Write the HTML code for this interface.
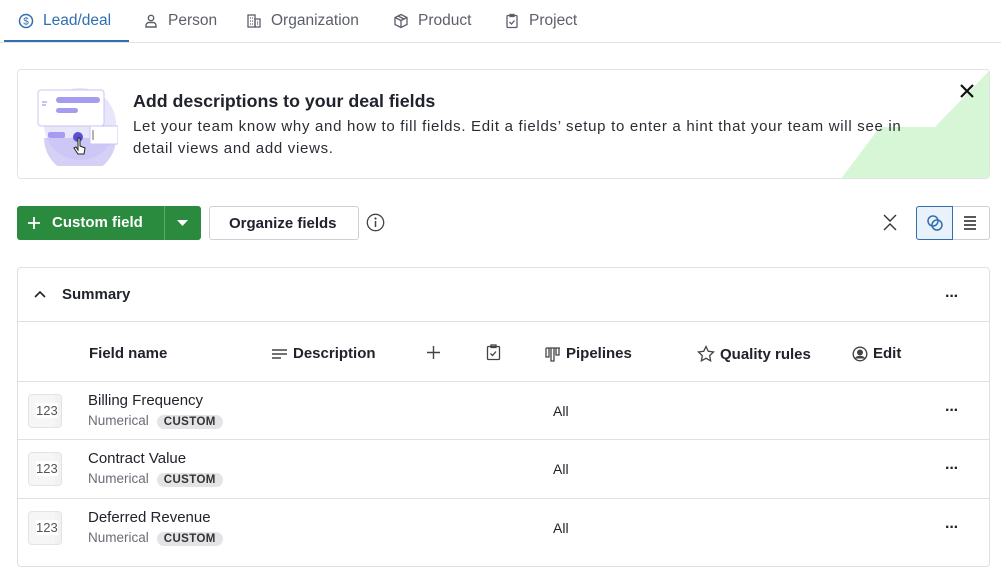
<!DOCTYPE html>
<html><head><meta charset="utf-8"><style>
*{box-sizing:border-box;margin:0;padding:0}
body{width:1001px;height:556px;overflow:hidden;background:#fff;font-family:"Liberation Sans",sans-serif;color:#21232c;position:relative}
.abs{position:absolute}
.tab{position:absolute;top:12px;font-size:15.5px;color:#5c5f6a;display:flex;align-items:center;gap:9px}
.tab svg{width:16px;height:16px}
.hdr{position:absolute;top:345px;font-size:15px;font-weight:bold;color:#21232c;display:flex;align-items:center;gap:5px}
.row{position:absolute;left:18px;width:971px;height:58px;border-top:1px solid #e0e0e3}
.ic{position:absolute;left:10px;top:12px;width:34px;height:34px;border:1px solid #e3e3e6;border-radius:4px;background:#f6f6f7;font-size:13px;color:#555;padding:8px 0 0 7px;box-shadow:inset -6px 0 0 #f2f2f3}
.ic span{background:#fff}
.nm{position:absolute;left:70px;top:10px;font-size:15px}
.sub{position:absolute;left:70px;top:31px;font-size:13.5px;color:#6a6d77}
.tag{display:inline-block;margin-left:8px;background:#e4e4e7;border-radius:9px;padding:1px 7px;font-size:11.5px;font-weight:bold;color:#333;letter-spacing:.4px}
.all{position:absolute;left:535px;top:21px;font-size:14px}
.dots{position:absolute;left:927px;top:20px;font-size:16px;font-weight:bold;letter-spacing:-1px}
</style></head><body>
<div class="tab" style="left:18px;color:#2f6fb0"><svg viewBox="0 0 16 16"><circle cx="8" cy="8" r="6.5" fill="none" stroke="#2f6fb0" stroke-width="1.5"/><text x="8" y="11.5" font-size="10" text-anchor="middle" fill="#2f6fb0" font-family="Liberation Sans">$</text></svg>Lead/deal</div>
<div class="abs" style="left:4px;top:40px;width:125px;height:2px;background:#2f6fb0"></div>
<div class="abs" style="left:0;top:42px;width:1001px;height:1px;background:#e3e3e6"></div>
<div class="tab" style="left:143px"><svg viewBox="0 0 16 16" fill="none" stroke="#5c5f6a" stroke-width="1.4"><circle cx="8" cy="5" r="2.7"/><path d="M3 14v-1.5a3 3 0 0 1 3-3h4a3 3 0 0 1 3 3V14z"/></svg>Person</div>
<div class="tab" style="left:246px"><svg viewBox="0 0 16 16" fill="none" stroke="#5c5f6a" stroke-width="1.3"><rect x="2" y="2" width="7" height="12"/><rect x="9" y="6" width="5" height="8"/><path d="M4 5h1M6 5h1M4 8h1M6 8h1M4 11h1M6 11h1M11 9h1M11 11h1"/></svg>Organization</div>
<div class="tab" style="left:393px"><svg viewBox="0 0 16 16" fill="none" stroke="#5c5f6a" stroke-width="1.3"><path d="M8 1.5l6 3v7l-6 3-6-3v-7z M2 4.5l6 3 6-3 M8 7.5v7 M5 3l6 3"/></svg>Product</div>
<div class="tab" style="left:504px"><svg viewBox="0 0 16 16" fill="none" stroke="#5c5f6a" stroke-width="1.3"><rect x="3" y="2.5" width="10" height="12" rx="1"/><rect x="6" y="1.5" width="4" height="2"/><path d="M5.5 9l2 2 3-3.5"/></svg>Project</div>

<div class="abs" style="left:17px;top:69px;width:973px;height:110px;border:1px solid #e3e3e6;border-radius:4px;overflow:hidden">
<svg class="abs" style="left:0;top:0" width="973" height="110"><polygon points="822,110 862,57 917,57 972,0 972,110" fill="#d6f6d6"/></svg>
<svg class="abs" style="left:18px;top:16px" width="82" height="80"><circle cx="44" cy="38" r="36" fill="#e8e6fb"/><path d="M8 52 h72 a36 36 0 0 1 -72 0z" fill="#b9b2f0" opacity=".6"/><rect x="2" y="4" width="66" height="36" rx="3" fill="#fff" stroke="#c9c4f3"/><rect x="20" y="11" width="44" height="6" rx="3" fill="#a59cf0"/><rect x="20" y="22" width="22" height="5" rx="2.5" fill="#a59cf0"/><path d="M6 16h5M6 19h4" stroke="#8e83ee"/><rect x="12" y="46" width="17" height="6" rx="2" fill="#a59cf0"/><rect x="54" y="40" width="28" height="18" fill="#fff" stroke="#c9c4f3"/><path d="M57 44v10" stroke="#666"/><circle cx="42" cy="51" r="5" fill="#5b4fd4"/><path d="M42 52v12l-2-3-2 1 4 6h6l1-6-5-2v-8z" fill="#fff" stroke="#222" stroke-width="1"/></svg>
<div class="abs" style="left:115px;top:21px;font-size:17.8px;font-weight:bold">Add descriptions to your deal fields</div>
<div class="abs" style="left:115px;top:46px;width:775px;font-size:15px;line-height:22px;letter-spacing:.7px;color:#2b2d35">Let your team know why and how to fill fields. Edit a fields’ setup to enter a hint that your team will see in detail views and add views.</div>
<svg class="abs" style="left:942px;top:14px" width="14" height="14"><path d="M1 1L13 13M13 1L1 13" stroke="#111" stroke-width="2.2"/></svg>
</div>

<div class="abs" style="left:17px;top:206px;width:184px;height:34px;background:#2a8a3e;border-radius:3px;color:#fff;font-weight:bold;font-size:15px">
<svg class="abs" style="left:11px;top:11px" width="12" height="12" stroke="#fff" stroke-width="1.8"><path d="M6 0v12M0 6h12"/></svg><span class="abs" style="left:35px;top:8px">Custom field</span>
<div class="abs" style="left:147px;top:0;width:1px;height:34px;background:#5fa96f"></div>
<svg class="abs" style="left:160px;top:14px" width="11" height="7"><path d="M0 0h11L5.5 6z" fill="#fff"/></svg></div>
<div class="abs" style="left:209px;top:206px;width:150px;height:34px;border:1px solid #cfd0d4;border-radius:3px;font-weight:bold;font-size:15px;padding:8px 0 0 19px">Organize fields</div>
<svg class="abs" style="left:366px;top:213px" width="19" height="19"><circle cx="9.5" cy="9.5" r="8.2" fill="none" stroke="#444" stroke-width="1.3"/><circle cx="9.5" cy="5.5" r="1.1" fill="#444"/><path d="M9.5 8v6" stroke="#444" stroke-width="1.5"/></svg>
<svg class="abs" style="left:882px;top:214px" width="16" height="17" fill="none" stroke="#333" stroke-width="1.4"><path d="M2 1l6 6 6-6M2 16l6-6 6 6"/></svg>
<div class="abs" style="left:916px;top:206px;width:74px;height:34px;border:1px solid #cfd0d4;border-radius:3px"></div>
<div class="abs" style="left:916px;top:206px;width:37px;height:34px;border:1px solid #2f6fb0;background:#e9f1fb;border-radius:3px 0 0 3px"></div>
<svg class="abs" style="left:925px;top:213px" width="20" height="20" fill="none" stroke="#2f6fb0" stroke-width="1.5"><circle cx="8" cy="8" r="5"/><circle cx="12" cy="12" r="5"/></svg>
<svg class="abs" style="left:963px;top:215px" width="14" height="15" stroke="#222" stroke-width="1.6"><path d="M1 2h12M1 6h12M1 10h12M1 14h12"/></svg>

<div class="abs" style="left:17px;top:267px;width:973px;height:300px;border:1px solid #e0e0e3;border-radius:4px"></div>
<svg class="abs" style="left:34px;top:290px" width="12" height="8" fill="none" stroke="#222" stroke-width="1.6"><path d="M1 7l5-5 5 5"/></svg>
<div class="abs" style="left:62px;top:286px;font-size:15px;font-weight:bold">Summary</div>
<div class="abs" style="left:945px;top:288px;font-size:16px;font-weight:bold;letter-spacing:-1px">···</div>
<div class="abs" style="left:18px;top:321px;width:971px;height:1px;background:#e0e0e3"></div>
<div class="hdr" style="left:89px">Field name</div>
<div class="hdr" style="left:271px"><svg width="17" height="14" stroke="#444" stroke-width="1.4"><path d="M1 3h15M1 7h15M1 11h9"/></svg>Description</div>
<svg class="abs" style="left:427px;top:346px" width="13" height="13" stroke="#444" stroke-width="1.4"><path d="M6.5 0v13M0 6.5h13"/></svg>
<svg class="abs" style="left:486px;top:344px" width="15" height="17" fill="none" stroke="#444" stroke-width="1.3"><rect x="1.5" y="2.5" width="12" height="13" rx="1"/><rect x="5" y="1" width="5" height="2.5"/><path d="M4.5 9.5l2 2 3.5-4"/></svg>
<div class="hdr" style="left:545px"><svg width="16" height="16" fill="none" stroke="#444" stroke-width="1.3"><path d="M1 2h14M1 2v9h3V2M6 2v13h3V2M11 2v7h3V2"/></svg>Pipelines</div>
<div class="hdr" style="left:697px"><svg width="18" height="18" fill="none" stroke="#444" stroke-width="1.3"><path d="M9 1.5l2.3 4.8 5.2.7-3.8 3.6.9 5.2L9 13.3l-4.6 2.5.9-5.2L1.5 7l5.2-.7z"/></svg>Quality rules</div>
<div class="hdr" style="left:852px"><svg width="16" height="16" fill="none" stroke="#444" stroke-width="1.4"><circle cx="8" cy="8" r="6.8"/><circle cx="8" cy="6.5" r="2.3" fill="#444"/><path d="M3.5 12.5c1.5-2.5 7.5-2.5 9 0" fill="#444"/></svg>Edit</div>

<div class="row" style="top:381px"><div class="ic"><span>123</span></div><div class="nm">Billing Frequency</div><div class="sub">Numerical<span class="tag">CUSTOM</span></div><div class="all">All</div><div class="dots">···</div></div>
<div class="row" style="top:439px"><div class="ic"><span>123</span></div><div class="nm">Contract Value</div><div class="sub">Numerical<span class="tag">CUSTOM</span></div><div class="all">All</div><div class="dots">···</div></div>
<div class="row" style="top:498px"><div class="ic"><span>123</span></div><div class="nm">Deferred Revenue</div><div class="sub">Numerical<span class="tag">CUSTOM</span></div><div class="all">All</div><div class="dots">···</div></div>
</body></html>
